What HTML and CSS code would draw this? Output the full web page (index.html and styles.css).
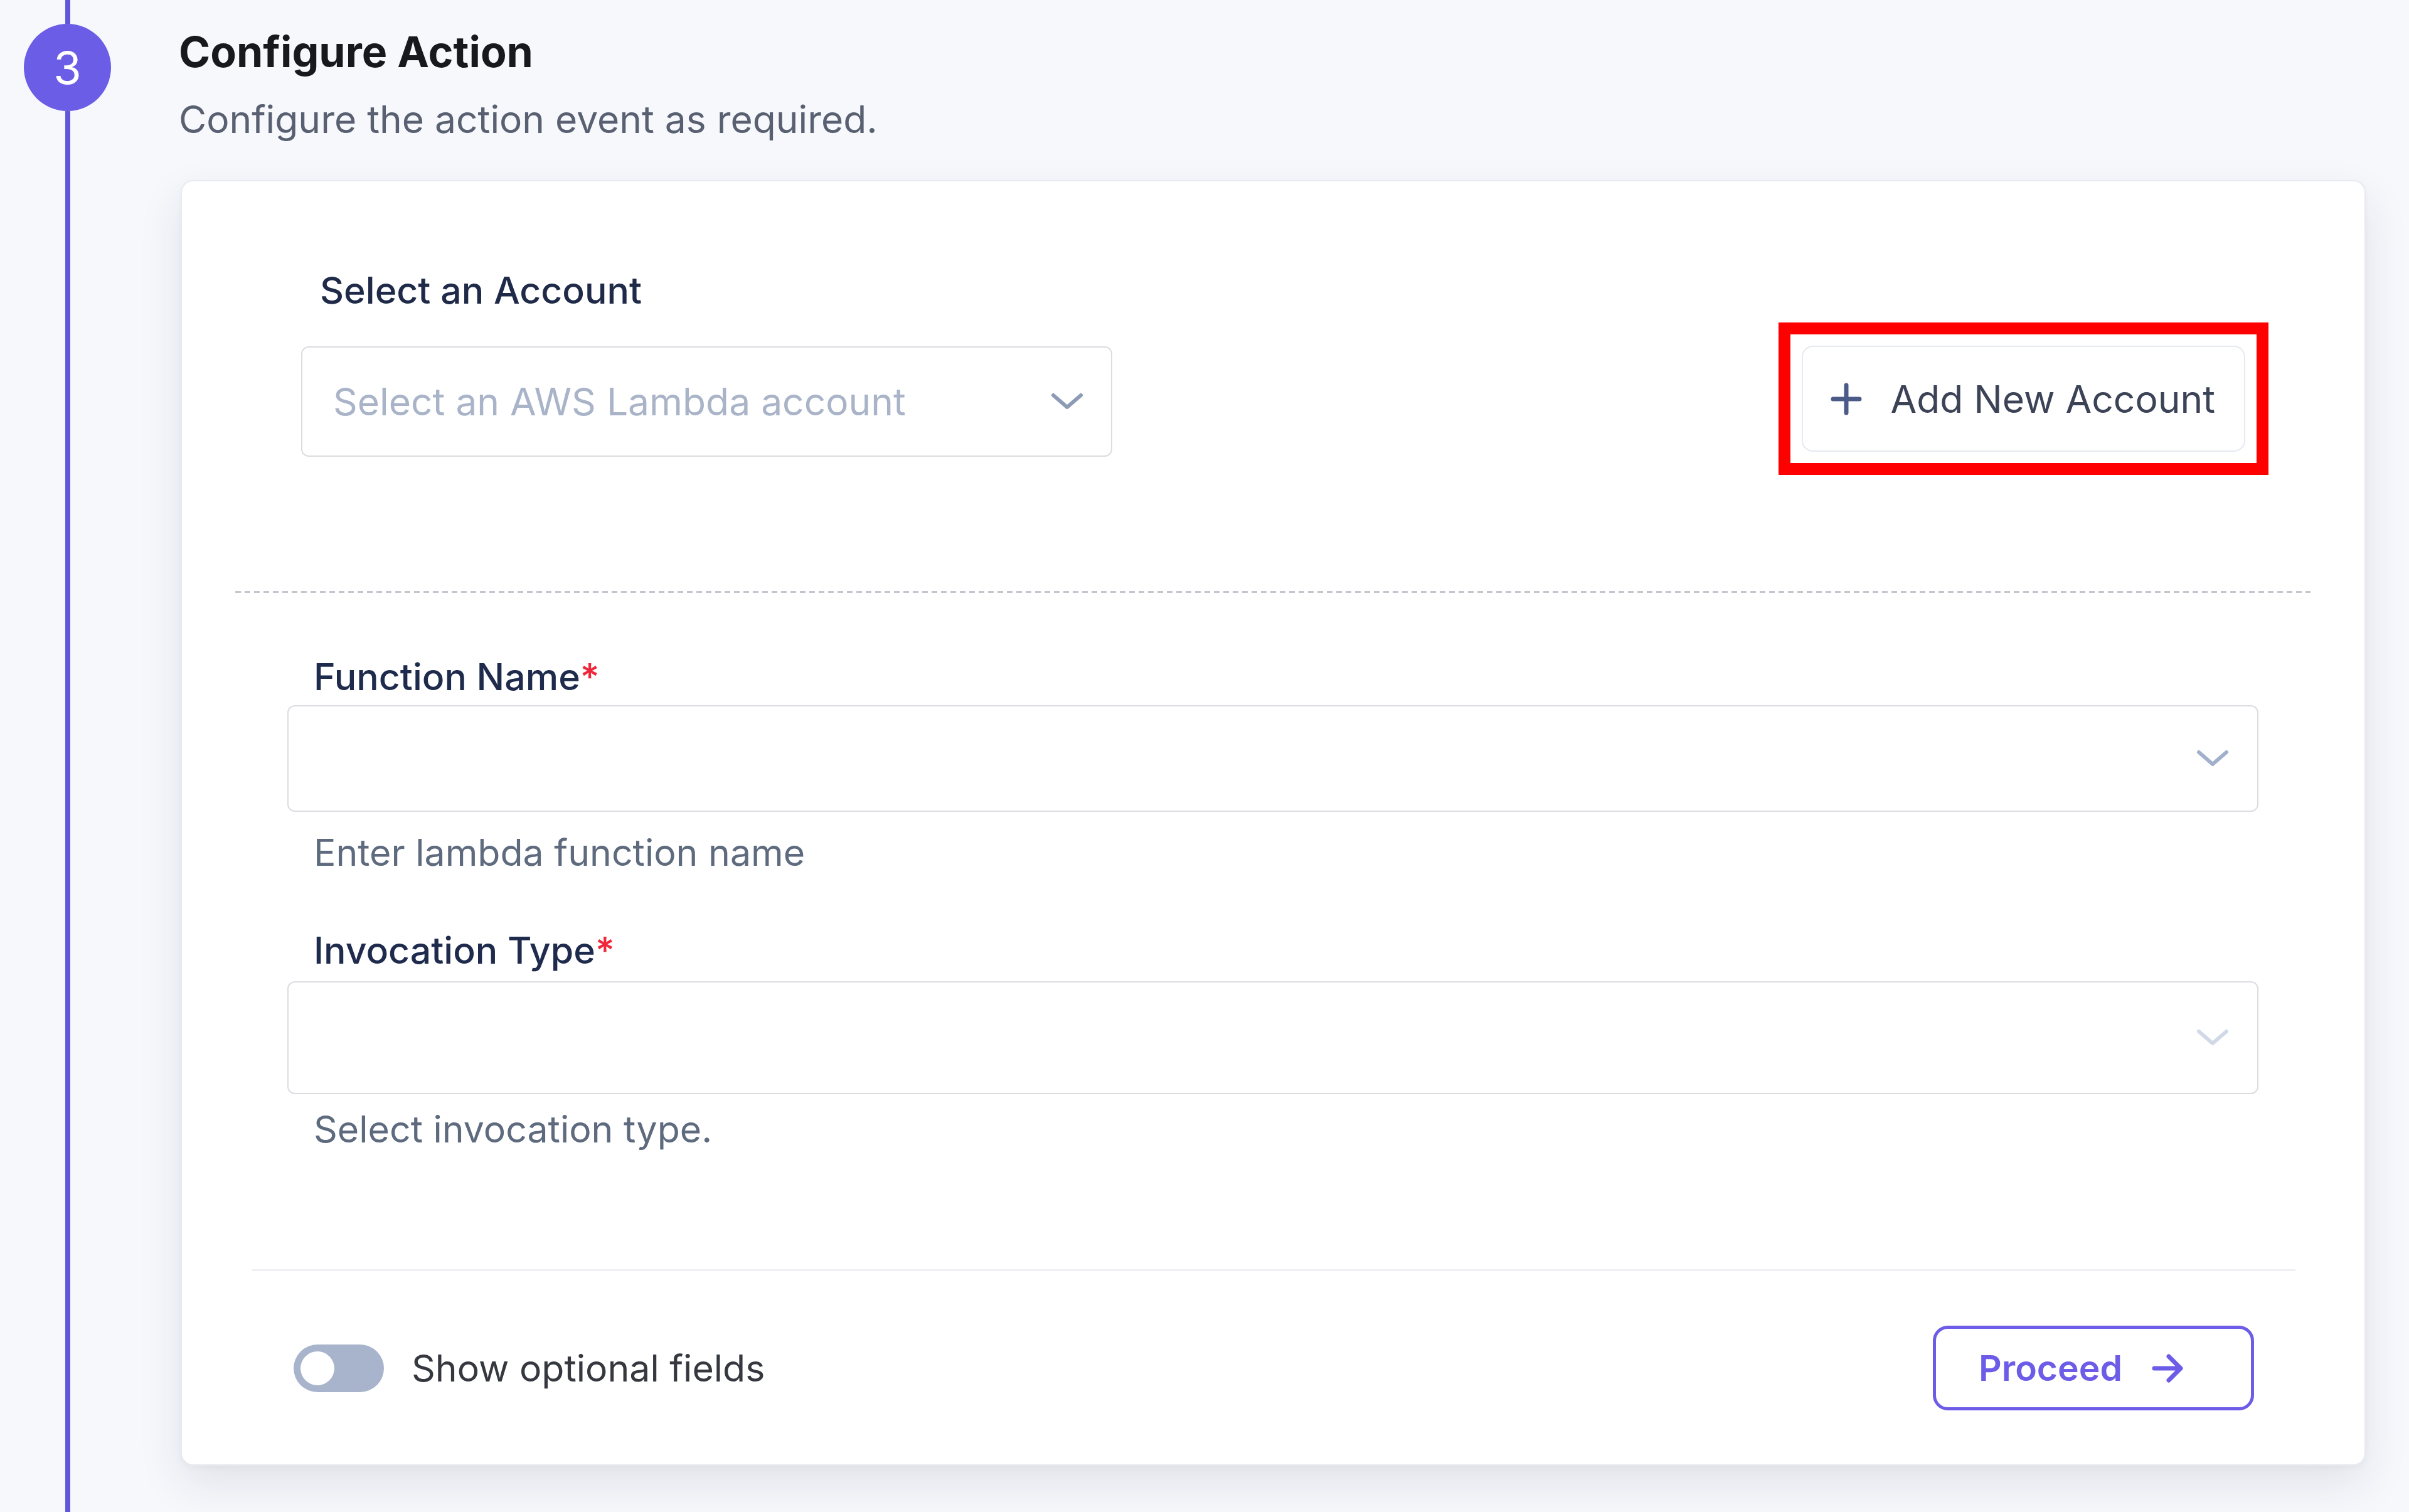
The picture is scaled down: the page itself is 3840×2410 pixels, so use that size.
FILE: index.html
```html
<!DOCTYPE html>
<html lang="en">
<head>
<meta charset="utf-8">
<title>Configure Action</title>
<link rel="stylesheet" href="styles.css">
</head>
<body>
<div class="page">
  <div class="rail">
    <div class="rail-line rail-line-top"></div>
    <div class="step-badge">3</div>
    <div class="rail-line rail-line-fill"></div>
  </div>
  <main class="content">
    <h1 class="step-title">Configure Action</h1>
    <p class="step-subtitle">Configure the action event as required.</p>
    <section class="card">
      <div class="account-row">
        <div class="account-col">
          <div class="account-label">Select an Account</div>
          <div class="select select-account">
            <span class="placeholder">Select an AWS Lambda account</span>
            <svg class="chevron chevron-dark" viewBox="0 0 52 30" width="52" height="30"><polyline points="4,5 26,24 48,5"/></svg>
          </div>
        </div>
        <div class="highlight">
          <button class="btn-add" type="button">
            <svg class="plus" viewBox="0 0 50 52" width="50" height="52"><path d="M25 4 V48 M4 26 H46"/></svg>
            <span>Add New Account</span>
          </button>
        </div>
      </div>
      <div class="dashed-divider"></div>
      <div class="fields">
        <div class="field">
          <div class="field-label">Function Name<span class="req">*</span></div>
          <div class="select select-field">
            <svg class="chevron chevron-mid" viewBox="0 0 52 30" width="52" height="30"><polyline points="4,5 26,24 48,5"/></svg>
          </div>
          <div class="helper">Enter lambda function name</div>
        </div>
        <div class="field field-second">
          <div class="field-label">Invocation Type<span class="req">*</span></div>
          <div class="select select-field select-tall">
            <svg class="chevron chevron-light" viewBox="0 0 52 30" width="52" height="30"><polyline points="4,5 26,24 48,5"/></svg>
          </div>
          <div class="helper helper-tight">Select invocation type.</div>
        </div>
      </div>
      <div class="solid-divider"></div>
      <div class="footer">
        <div class="toggle-wrap">
          <span class="toggle"><span class="knob"></span></span>
          <span class="toggle-text">Show optional fields</span>
        </div>
        <button class="btn-proceed" type="button">
          <span>Proceed</span>
          <svg class="arrow" viewBox="0 0 51 50" width="51" height="50"><path d="M4 25 H46 M27 6 L46 25 L27 44"/></svg>
        </button>
      </div>
    </section>
  </main>
</div>
</body>
</html>
```

FILE: styles.css
```css
* { box-sizing: border-box; }

html, body {
  margin: 0;
  padding: 0;
}

body {
  background: #f7f8fc;
  font-family: Inter, "Noto Sans", sans-serif;
  color: #1f2937;
}

.page {
  display: flex;
  height: 2410px;
  overflow: hidden;
}

/* Stepper rail */
.rail {
  width: 139px;
  margin-left: 38px;
  flex-shrink: 0;
  display: flex;
  flex-direction: column;
  align-items: center;
}

.rail-line {
  width: 8px;
  background: #6058da;
}

.rail-line-top { height: 38px; }
.rail-line-fill { flex: 1; }

.step-badge {
  width: 139px;
  height: 139px;
  border-radius: 50%;
  background: #6b5de6;
  color: #ffffff;
  font-size: 72px;
  font-weight: 400;
  line-height: 1;
  display: flex;
  align-items: center;
  justify-content: center;
  flex-shrink: 0;
}

/* Content */
.content {
  margin-left: 111px;
  width: 3483px;
  padding-top: 41px;
}

.step-title {
  margin: 0 0 0 -3px;
  font-size: 68px;
  font-weight: 700;
  line-height: normal;
  color: #18191d;
}

.step-subtitle {
  margin: 30px 0 0 -3px;
  font-size: 60.5px;
  font-weight: 400;
  line-height: normal;
  color: #586071;
}

.card {
  margin-top: 60px;
  background: #ffffff;
  border: 2px solid #e8eaef;
  border-radius: 20px;
  box-shadow: 0 28px 70px rgba(30, 35, 60, 0.10), 0 4px 10px rgba(30, 35, 60, 0.03);
}

/* Account row */
.account-row {
  display: flex;
  align-items: flex-start;
  padding: 138px 153px 0 190px;
}

.account-label {
  padding-left: 30px;
  font-size: 59px;
  font-weight: 500;
  line-height: normal;
  color: #1e2a48;
}

.select {
  display: flex;
  align-items: center;
  border: 2px solid #dcdde1;
  border-radius: 12px;
  background: #ffffff;
}

.select-account {
  margin-top: 54px;
  width: 1293px;
  height: 176px;
  padding: 0 44px 0 49px;
  justify-content: space-between;
}

.placeholder {
  font-size: 60.5px;
  color: #a9b4c8;
}

.chevron {
  fill: none;
  stroke-width: 6;
  stroke-linecap: round;
  stroke-linejoin: round;
  flex-shrink: 0;
}

.chevron-dark { stroke: #8e9bb6; }
.chevron-mid { stroke: #a3b0cb; }
.chevron-light { stroke: #d2d9e6; }

.highlight {
  margin-left: auto;
  margin-top: 87px;
  border: 19px solid #ff0000;
  padding: 18px;
}

.btn-add {
  display: flex;
  align-items: center;
  gap: 45px;
  height: 169px;
  padding: 0 46px 0 44px;
  border: 2px solid #e6e9f1;
  border-radius: 18px;
  background: #ffffff;
  font-family: inherit;
  font-size: 60.5px;
  font-weight: 400;
  color: #3c4356;
}

.plus {
  fill: none;
  stroke: #4c5a88;
  stroke-width: 7;
  stroke-linecap: round;
}

.dashed-divider {
  margin: 185px 86px 0 85px;
  height: 3px;
  background: repeating-linear-gradient(90deg, #c3c6cd 0 9px, transparent 9px 15px);
}

/* Fields */
.fields {
  padding: 98px 169px 0 168px;
}

.field-second {
  margin-top: 85px;
}

.field-label {
  padding-left: 42px;
  font-size: 59px;
  font-weight: 500;
  line-height: normal;
  color: #1f2b4c;
}

.req {
  color: #f0263a;
}

.select-field {
  margin-top: 10px;
  height: 170px;
  padding-right: 45px;
  justify-content: flex-end;
}

.field-second .select-field {
  margin-top: 14px;
}

.select-tall {
  height: 180px;
}

.helper {
  margin-top: 29px;
  padding-left: 42px;
  font-size: 59px;
  line-height: normal;
  color: #5e6a7e;
}

.helper-tight {
  margin-top: 20px;
}

.solid-divider {
  margin: 188px 110px 0 112px;
  height: 3px;
  background: #eef0f5;
}

/* Footer */
.footer {
  display: flex;
  align-items: center;
  justify-content: space-between;
  padding: 87px 176px 86px 178px;
}

.toggle-wrap {
  display: flex;
  align-items: center;
  gap: 44px;
}

.toggle {
  width: 144px;
  height: 76px;
  border-radius: 38px;
  background: #a8b4cb;
  display: flex;
  align-items: center;
  padding-left: 11px;
}

.knob {
  width: 54px;
  height: 54px;
  border-radius: 50%;
  background: #ffffff;
}

.toggle-text {
  font-size: 59px;
  color: #35383e;
}

.btn-proceed {
  display: flex;
  align-items: center;
  gap: 47px;
  width: 512px;
  height: 135px;
  padding: 0 0 0 68px;
  border: 5px solid #6c5ce7;
  border-radius: 24px;
  background: #ffffff;
  font-family: inherit;
  font-size: 57px;
  font-weight: 600;
  color: #6c5ce7;
}

.arrow {
  fill: none;
  stroke: #6c5ce7;
  stroke-width: 7;
  stroke-linecap: round;
  stroke-linejoin: round;
}
```
